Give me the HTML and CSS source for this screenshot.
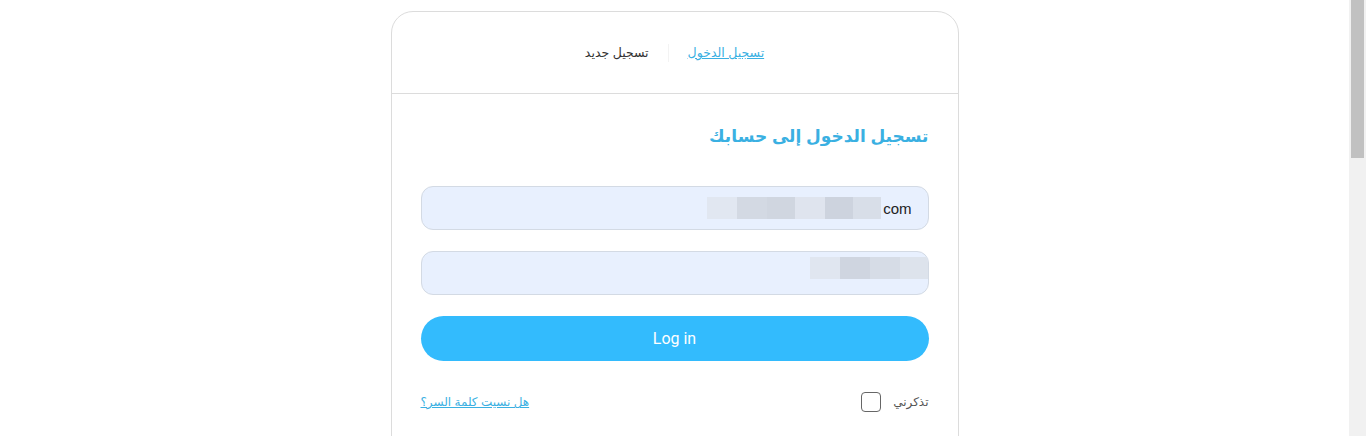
FILE: index.html
```html
<!DOCTYPE html>
<html lang="ar" dir="rtl">
<head>
    <meta charset="UTF-8">
    <meta name="viewport" content="width=device-width, initial-scale=1.0">
    <title>تسجيل الدخول</title>
    <link rel="stylesheet" href="styles.css">
</head>
<body>
    <div class="window">
        <div class="page">
            <div class="card">
                <!-- tabs -->
                <div class="tabs">
                    <a href="#" class="tab tab-active">تسجيل الدخول</a>
                    <span class="tab-sep"></span>
                    <a href="#" class="tab">تسجيل جديد</a>
                </div>

                <form class="login-form">
                    <h1>تسجيل الدخول إلى حسابك</h1>

                    <div class="field">
                        <div class="fake-input">
                            <span class="blur b1"></span>
                            <span class="blur b2"></span>
                            <span class="blur b3"></span>
                            <span class="blur b4"></span>
                            <span class="blur b5"></span>
                            <span class="blur b5b"></span>
                            <span class="val">com</span>
                        </div>
                    </div>

                    <div class="field">
                        <div class="fake-input pass">
                            <span class="blur b6"></span>
                            <span class="blur b7"></span>
                            <span class="blur b8"></span>
                            <span class="blur b9"></span>
                        </div>
                    </div>

                    <button type="submit" class="btn-login">Log in</button>

                    <div class="form-foot">
                        <label class="remember">
                            <span>تذكرني</span>
                            <span class="check"></span>
                        </label>
                        <a href="#" class="forgot">هل نسيت كلمة السر؟</a>
                    </div>
                </form>
            </div>
        </div>

        <!-- window scrollbar -->
        <div class="scroll-track">
            <div class="scroll-thumb"></div>
        </div>
    </div>
</body>
</html>
```

FILE: styles.css
```css
html, body {
    margin: 0;
    padding: 0;
    background: #fff;
}

body {
    font-family: "Liberation Sans", "DejaVu Sans", sans-serif;
    color: #222;
}

.window {
    display: flex;
    direction: ltr;
    height: 100vh;
    overflow: hidden;
}

.page {
    flex: 1;
    padding-top: 11px;
    direction: rtl;
}

.scroll-track {
    width: 17px;
    background: #f1f1f1;
}

.scroll-thumb {
    height: 158px;
    margin: 0 2px;
    background: #c1c1c1;
}

.card {
    width: 568px;
    margin: 0 auto;
    box-sizing: border-box;
    border: 1px solid #dcdcdc;
    border-radius: 22px;
    height: 460px;
}

.tabs {
    height: 81px;
    display: flex;
    justify-content: center;
    align-items: center;
    gap: 19px;
    border-bottom: 1px solid #dcdcdc;
    font-size: 12.5px;
}

.tab {
    color: #333;
    text-decoration: none;
}

.tab-active {
    color: #3ab0e2;
    text-decoration: underline;
}

.tab-sep {
    width: 1px;
    height: 18px;
    background: #f3f3f3;
}

.login-form {
    padding: 28px 29px 40px;
}

h1 {
    margin: 0 0 34px;
    font-size: 17px;
    line-height: 30px;
    color: #3ab0e2;
    font-weight: bold;
}

.field {
    margin-bottom: 21px;
}

.fake-input {
    height: 44px;
    box-sizing: border-box;
    border: 1px solid #d3dae4;
    border-radius: 12px;
    background: #e8f0fe;
    display: flex;
    align-items: center;
    justify-content: flex-end;
    padding: 0 16px 0 0;
    direction: ltr;
    font-size: 15px;
    color: #222;
    overflow: hidden;
}

.fake-input.pass {
    padding-right: 0;
    align-items: flex-start;
    padding-top: 5px;
}

.val {
    margin-left: 2px;
}

.blur {
    height: 22px;
    background: #d3dae6;
}

.b1 { width: 30px; background: #e1e7f1; }
.b2 { width: 30px; background: #d3d9e3; }
.b3 { width: 28px; background: #d0d6e0; }
.b4 { width: 30px; background: #dfe4ee; }
.b5 { width: 28px; background: #cdd3de; }
.b5b { width: 28px; background: #d8dee8; }
.b6 { width: 30px; background: #e0e6f0; }
.b7 { width: 30px; background: #cfd5e0; }
.b8 { width: 30px; background: #d6dce6; }
.b9 { width: 28px; background: #dde3ec; }

.btn-login {
    display: block;
    width: 100%;
    height: 45px;
    margin-top: 21px;
    border: none;
    border-radius: 23px;
    background: #33bbfd;
    color: #fff;
    font-family: "Roboto", "Liberation Sans", sans-serif;
    font-size: 16px;
    cursor: pointer;
}

.form-foot {
    display: flex;
    justify-content: space-between;
    align-items: center;
    margin-top: 31px;
    font-size: 12px;
}

.remember {
    display: flex;
    align-items: center;
    gap: 12px;
    color: #555;
}

.check {
    width: 18px;
    height: 18px;
    border: 1px solid #666;
    border-radius: 4px;
}

.forgot {
    color: #3ab0e2;
    text-decoration: underline;
}
```
